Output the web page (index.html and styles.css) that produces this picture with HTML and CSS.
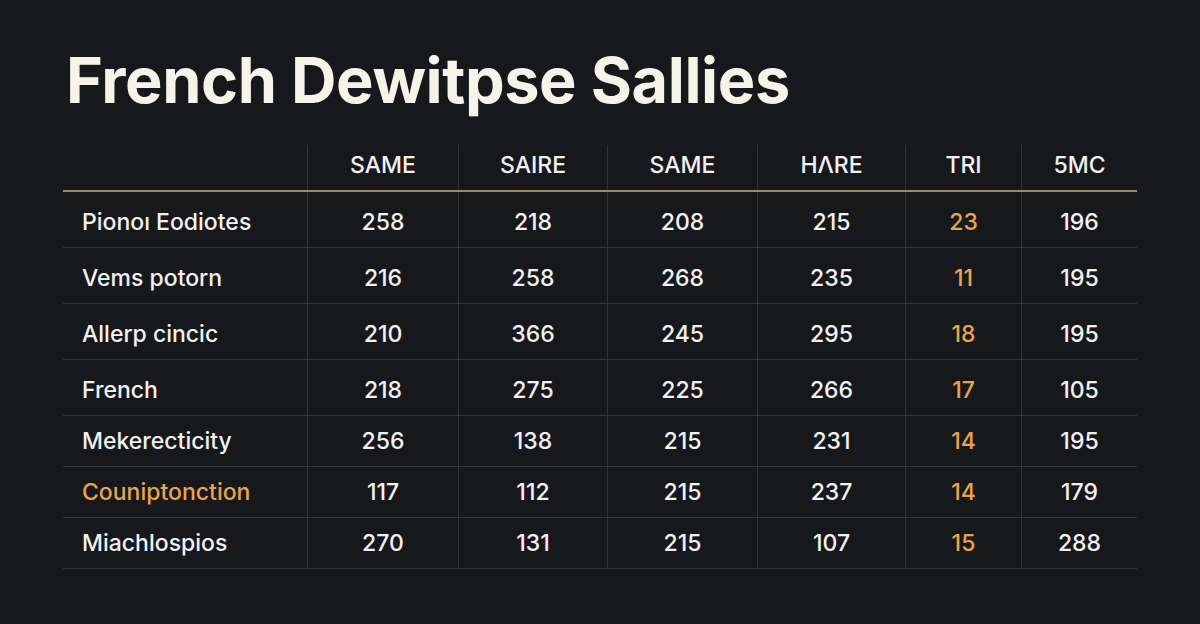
FILE: index.html
```html
<!DOCTYPE html>
<html lang="en">
<head>
<meta charset="utf-8">
<title>French Dewitpse Sallies</title>
<link rel="stylesheet" href="styles.css">
</head>
<body>
<main class="page">
  <h1 class="title">French Dewitpse Sallies</h1>
  <div class="table">
    <div class="row head">
      <div class="cell label"></div>
      <div class="cell">SAME</div>
      <div class="cell">SAIRE</div>
      <div class="cell">SAME</div>
      <div class="cell">HΛRE</div>
      <div class="cell">TRI</div>
      <div class="cell">5MC</div>
    </div>
    <div class="row tall">
      <div class="cell label">Pionoı Eodiotes</div>
      <div class="cell">258</div><div class="cell">218</div><div class="cell">208</div><div class="cell">215</div><div class="cell accent">23</div><div class="cell">196</div>
    </div>
    <div class="row tall">
      <div class="cell label">Vems potorn</div>
      <div class="cell">216</div><div class="cell">258</div><div class="cell">268</div><div class="cell">235</div><div class="cell accent">11</div><div class="cell">195</div>
    </div>
    <div class="row tall">
      <div class="cell label">Allerp cincic</div>
      <div class="cell">210</div><div class="cell">366</div><div class="cell">245</div><div class="cell">295</div><div class="cell accent">18</div><div class="cell">195</div>
    </div>
    <div class="row tall">
      <div class="cell label">French</div>
      <div class="cell">218</div><div class="cell">275</div><div class="cell">225</div><div class="cell">266</div><div class="cell accent">17</div><div class="cell">105</div>
    </div>
    <div class="row short">
      <div class="cell label">Mekerecticity</div>
      <div class="cell">256</div><div class="cell">138</div><div class="cell">215</div><div class="cell">231</div><div class="cell accent">14</div><div class="cell">195</div>
    </div>
    <div class="row short">
      <div class="cell label accent">Couniptonction</div>
      <div class="cell">117</div><div class="cell">112</div><div class="cell">215</div><div class="cell">237</div><div class="cell accent">14</div><div class="cell">179</div>
    </div>
    <div class="row short">
      <div class="cell label">Miachlospios</div>
      <div class="cell">270</div><div class="cell">131</div><div class="cell">215</div><div class="cell">107</div><div class="cell accent">15</div><div class="cell">288</div>
    </div>
  </div>
</main>
</body>
</html>
```
FILE: styles.css
```css
* { box-sizing: border-box; }
html, body {
  margin: 0;
  padding: 0;
  background: #17181c;
  height: 100%;
}
body {
  font-family: Inter, "Noto Sans", sans-serif;
  color: #f1f1f1;
}
.page {
  padding: 40px 63px 0 63px;
  width: 1200px;
}
.title {
  margin: 0 0 0 3px;
  font-size: 63px;
  font-weight: 700;
  line-height: 80px;
  color: #f6f3e8;
  letter-spacing: -0.4px;
}
.table {
  margin-top: 25px;
  width: 1074px;
}
.row {
  display: grid;
  grid-template-columns: 244px 151px 149px 150px 148px 116px 116px;
  border-bottom: 1px solid #34353a;
}
.row.head {
  height: 47px;
  border-bottom: 2px solid #a3855e;
}
.row.tall { height: 56px; }
.row.short { height: 51px; }
.cell {
  display: flex;
  align-items: center;
  justify-content: center;
  font-size: 23px;
  font-weight: 500;
  border-left: 1px solid #303136;
  padding-top: 5px;
}
.short .cell {
  padding-top: 0;
}
.head .cell {
  padding-top: 0;
  padding-bottom: 5px;
}
.cell.label {
  justify-content: flex-start;
  padding-left: 19px;
  border-left: none;
}
.accent { color: #eaa449; }
```
